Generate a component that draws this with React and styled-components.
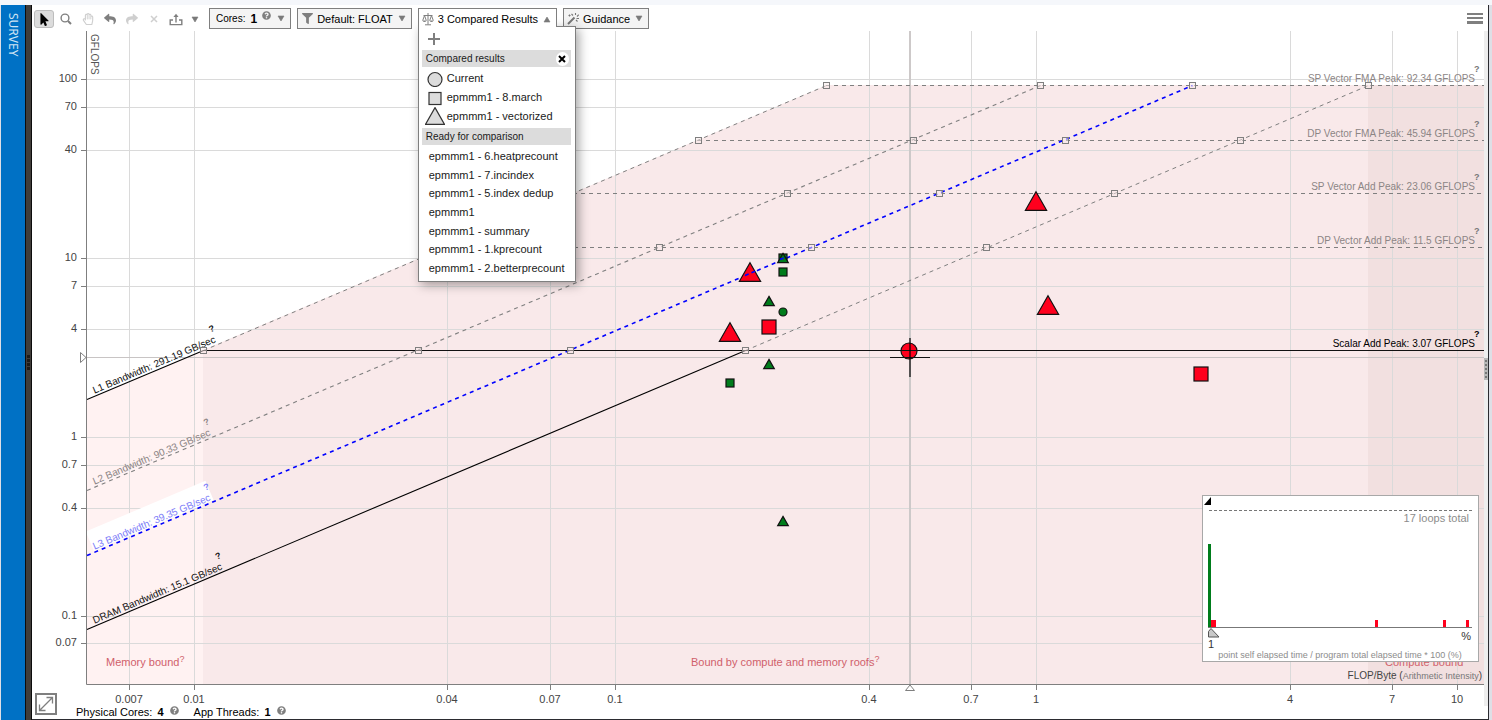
import React, { useState } from "react";
import styled, { createGlobalStyle, css } from "styled-components";
import { FaFilter, FaMousePointer, FaRegHandPaper, FaReply, FaShare, FaQuestionCircle } from "react-icons/fa";

const Global = createGlobalStyle`
  *, *::before, *::after { box-sizing: border-box; }
  body { margin: 0; background: #f5f7fb; font-family: "Liberation Sans", Arial, sans-serif; font-size: 11px; color: #1a1a1a; }
  button { font: inherit; color: inherit; margin: 0; padding: 0; border: 0; background: none; cursor: pointer; }
  ul { list-style: none; margin: 0; padding: 0; }
  h3 { margin: 0; }
`;

/* ---------- frame ---------- */
const Page = styled.div`
  display: flex;
  min-height: 100vh;
  padding: 5px 3px 0 1px;
  background: linear-gradient(#f5f7fb 5px, #dedfe6 5px);
`;
const Rail = styled.nav`
  flex: none;
  width: 24px;
  background: #0071c5;
`;
const RailLink = styled.a`
  display: block;
  width: 24px;
  padding-top: 8px;
  writing-mode: vertical-rl;
  font: 12px/23px "Noto Sans", sans-serif;
  color: #cfe3f3;
  text-decoration: none;
`;
const Handle = styled.div`
  display: grid;
  align-content: center;
  justify-content: center;
  gap: 1px;
`;
const LeftSplitter = styled(Handle)`
  flex: none;
  width: 7px;
  border: solid #0c0c0c;
  border-width: 0 1px;
  background: #403d3a;
`;
const RightSplitter = styled(Handle)`
  flex: none;
  width: 4px;
  background: #eeeeee;
`;
const RightGrip = styled(Handle)`
  width: 4px;
  height: 22px;
  gap: 2px;
  background: #b8b8b8;
`;
const Dot = styled.i`
  width: ${(p) => p.$size}px;
  height: ${(p) => p.$size}px;
  background: ${(p) => p.$color};
`;
const Main = styled.main`
  flex: 1;
  min-width: 0;
  display: flex;
  flex-direction: column;
  background: #fff;
  border: solid #2b2b30;
  border-width: 0 1px 1px 0;
`;

/* ---------- toolbar ---------- */
const Toolbar = styled.header`
  display: flex;
  align-items: flex-start;
  height: 26px;
  padding: 3px 5px 0 2px;
`;
const Tools = styled.div`
  display: flex;
  padding-top: 2px;
  margin-right: 6px;
`;
const Tool = styled.button`
  display: flex;
  align-items: center;
  justify-content: center;
  width: ${(p) => p.$w || 22}px;
  height: 18px;
  color: ${(p) => (p.$dim ? "#cfcfcf" : "#7f7f7f")};
  ${(p) =>
    p.$active &&
    css`
      width: 20px;
      margin-right: 1px;
      color: #000;
      background: #dcdcdc;
      border: 1px solid #bdbdbd;
      border-radius: 3px;
    `}
`;
const Drop = styled.div`
  position: relative;
  margin-right: 6px;
`;
const DropButton = styled.button`
  display: flex;
  align-items: center;
  height: 21px;
  padding: 0 5px 0 ${(p) => p.$pad || 4}px;
  white-space: nowrap;
  color: #000;
  background: #f4f4f4;
  border: 1px solid #7f7f7f;
  ${(p) =>
    p.$open &&
    css`
      position: relative;
      z-index: 3;
      height: 19px;
      padding-bottom: 0;
      padding-top: 2px;
      background: #fff;
      border-bottom: 0;
    `}
`;
const DropText = styled.span`
  margin: 0 5px 0 4px;
`;
const CoresText = styled.span`
  font-size: 10px;
`;
const CoresValue = styled.b`
  margin: 0 5px 0 5px;
  font-size: 12px;
`;
const CoresHelp = styled.span`
  display: flex;
  align-self: flex-start;
  margin: 2px 6px 0 0;
  color: #7f7f7f;
`;
const MenuButton = styled.button`
  display: grid;
  gap: 2px;
  width: 16px;
  margin: 5px 0 0 auto;
`;
const Bar = styled.i`
  height: 2px;
  background: #7f7f7f;
  &:last-child { height: 3px; }
`;

/* ---------- comparison menu ---------- */
const Menu = styled.section`
  position: absolute;
  z-index: 2;
  top: 18px;
  left: 0;
  width: 158px;
  padding: 0 4px 4px 3px;
  background: #fff;
  border: 1px solid #7f7f7f;
  box-shadow: 3px 3px 10px rgba(0, 0, 0, 0.35);
`;
const AddButton = styled.button`
  display: flex;
  align-items: center;
  height: 23px;
  padding-left: 5px;
`;
const MenuHead = styled.h3`
  display: flex;
  align-items: center;
  justify-content: space-between;
  height: 17px;
  padding: 0 2px 0 4px;
  font-size: 10px;
  font-weight: 400;
  background: #dcdcdc;
`;
const CloseButton = styled.button`
  display: flex;
  align-items: center;
  justify-content: center;
  width: 13px;
  height: 14px;
  border-radius: 7px;
  background: #fff;
`;
const ComparedList = styled.ul`
  display: grid;
  grid-auto-rows: 1fr;
  height: 56px;
  margin: 2px 0 3px;
  padding-left: 3px;
`;
const ReadyList = styled(ComparedList)`
  height: 130px;
  margin: 2px 0 0;
  padding-left: 7px;
`;
const Item = styled.li`
  display: flex;
  align-items: center;
  gap: 2px;
  white-space: nowrap;
`;

/* ---------- chart ---------- */
const ChartRow = styled.div`
  display: flex;
`;
const ChartArea = styled.div`
  position: relative;
  flex: 1;
  min-width: 0;
`;
const Plot = styled.svg`
  display: block;
  width: 100%;
  height: auto;
`;
const Histogram = styled.aside`
  position: absolute;
  right: 5px;
  bottom: 44px;
  width: 277px;
  height: 167px;
  background: #fff;
  border: 1px solid #a8a8a8;
`;
const Footer = styled.footer`
  position: relative;
  display: flex;
  align-items: center;
  gap: 15px;
  height: 13px;
  padding-left: 44px;
  color: #000;
`;
const Stat = styled.span`
  display: flex;
  align-items: center;
  gap: 5px;
  line-height: 15px;
`;
const StatHelp = styled.span`
  display: flex;
  margin: 0 0 4px 1px;
  color: #7f7f7f;
`;
const ExpandButton = styled.button`
  position: absolute;
  left: 3px;
  bottom: 4px;
  width: 22px;
  height: 22px;
`;

const X_TICKS = [
  ["0.007", 129], ["0.01", 194], ["0.04", 447], ["0.07", 550], ["0.1", 615], ["0.4", 869],
  ["0.7", 971], ["1", 1036], ["4", 1290], ["7", 1392], ["10", 1457],
];
const Y_TICKS = [
  ["100", 79], ["70", 107], ["40", 150], ["10", 258], ["7", 286], ["4", 329],
  ["1", 437], ["0.7", 465], ["0.4", 508], ["0.1", 616], ["0.07", 643],
];
const ROOFS = [
  { label: "SP Vector FMA Peak: 92.34 GFLOPS", y: 85, from: 826 },
  { label: "DP Vector FMA Peak: 45.94 GFLOPS", y: 140, from: 698 },
  { label: "SP Vector Add Peak: 23.06 GFLOPS", y: 193, from: 573 },
  { label: "DP Vector Add Peak: 11.5 GFLOPS", y: 247, from: 446 },
];
const BANDS = [
  { label: "L1 Bandwidth: 291.19 GB/sec", y: 399, knee: 203, end: 826, color: "#000", text: "#111", solid: true },
  { label: "L2 Bandwidth: 90.33 GB/sec", y: 490, knee: 418, end: 1040, color: "#7f7f7f", text: "#8c8585" },
  { label: "L3 Bandwidth: 39.35 GB/sec", y: 555, knee: 570, end: 1192, color: "#0000ff", text: "#8080f8", plate: true },
  { label: "DRAM Bandwidth: 15.1 GB/sec", y: 629, knee: 745, end: 1368, color: "#000", text: "#111", solid: true },
];
const NODES = [
  [203, 350], [698, 140], [826, 85], [418, 350], [659, 247], [787, 193], [913, 140], [1040, 85],
  [570, 350], [811, 247], [939, 193], [1065, 140], [1192, 85],
  [745, 350], [986, 247], [1114, 193], [1240, 140], [1368, 85],
];
const RED = "#ff001d";
const GREEN = "#007c1b";
const POINTS = [
  ["square", 783, 258, 4, GREEN], ["triangle", 783, 258, 5, GREEN],
  ["triangle", 750, 272, 10, RED], ["square", 783, 272, 4, GREEN],
  ["triangle", 769, 301, 5, GREEN], ["circle", 783, 312, 4, GREEN],
  ["square", 769, 327, 7, RED], ["triangle", 730, 332, 10, RED],
  ["triangle", 1036, 201, 10, RED], ["triangle", 1048, 305, 10, RED],
  ["triangle", 769, 364, 5, GREEN], ["square", 730, 383, 4, GREEN],
  ["square", 1201, 374, 7, RED], ["triangle", 783, 521, 5, GREEN], ["circle", 909, 351, 8, RED],
];

function Mark({ kind, x, y, r, fill, stroke = "#111" }) {
  const paint = { fill, stroke, strokeWidth: 1.2 };
  if (kind === "circle") return <circle cx={x} cy={y} r={r} {...paint} />;
  if (kind === "square") return <rect x={x - r} y={y - r} width={2 * r} height={2 * r} {...paint} />;
  const h = r * 0.93;
  return <path d={`M${x} ${y - h}L${x + r * 1.06} ${y + h}H${x - r * 1.06}Z`} {...paint} />;
}

function Caret({ up }) {
  return (
    <svg width="8" height="7" viewBox="0 0 8 7" aria-hidden="true">
      <path d={up ? "M1 6L4 1L7 6Z" : "M1 1H7L4 6Z"} fill="#7a7a7a" stroke="#7a7a7a" strokeWidth=".6" />
    </svg>
  );
}

function SearchIcon() {
  return (
    <svg width="12" height="12" viewBox="0 0 12 12" fill="none" stroke="currentColor">
      <circle cx="5" cy="5" r="3.9" strokeWidth="1.4" />
      <path d="M8 8L11 11" strokeWidth="2" />
    </svg>
  );
}

function ExportIcon() {
  return (
    <svg width="14" height="13" viewBox="0 0 14 13" fill="none" stroke="currentColor" strokeWidth="1.4">
      <path d="M4 7H1.2V11.6H12.8V7H10M7 9.5V2.5" />
      <path d="M4.4 4L7 .8L9.6 4Z" fill="currentColor" stroke="none" />
    </svg>
  );
}

function ScaleIcon() {
  return (
    <svg width="12" height="13" viewBox="0 0 12 13" fill="none" stroke="#7f7f7f" strokeWidth="1">
      <path d="M6 0V11.5M3 11.8H9M1.5 2.5H10.5M2.5 2.5L.7 7.5M2.5 2.5L4.3 7.5M9.5 2.5L7.7 7.5M9.5 2.5L11.3 7.5" />
      <path d="M.3 7.5H4.7Q2.5 10.5 .3 7.5ZM7.3 7.5H11.7Q9.5 10.5 7.3 7.5Z" fill="#7f7f7f" stroke="none" />
    </svg>
  );
}

function WandIcon() {
  return (
    <svg width="12" height="12" viewBox="0 0 12 12" fill="none" stroke="#777">
      <path d="M1 11L7.5 4.5" strokeWidth="2" />
      <path d="M8.5 0V2M10 3.5L11.8 1.7M9.5 5.5H12M4.5 1L6 2.5M1.5 2.5H3.5M2.5 1.5V3.5M9 7L10.5 8.5" strokeWidth="1.1" />
    </svg>
  );
}

function Band({ y, knee, end, color, text, label, solid, plate }) {
  return (
    <g>
      <g clipPath="url(#plotClip)">
        <g transform={`translate(87 ${y}) rotate(-23)`}>
          {plate && <rect x="8" y="-22" width="130" height="21" fill="#fff" />}
          <text x="9" y="-2" fontSize="10" fill={text}>
            {label}
            <tspan dx="-2" dy="-11" fontSize="9" fontWeight="700">?</tspan>
          </text>
        </g>
      </g>
      <path
        d={`M87 ${y + 0.5}L${solid ? knee + 0.5 : end + 0.5} ${solid ? 350.5 : 85.5}`}
        stroke={color}
        strokeWidth={plate ? 1.6 : 1.1}
        strokeDasharray={solid ? undefined : "4 4"}
      />
      {solid && <path d={`M${knee + 0.5} 350.5L${end + 0.5} 85.5`} stroke="#7f7f7f" strokeDasharray="4 4" />}
    </g>
  );
}

function Roofline() {
  return (
    <Plot viewBox="32 31 1452 675" fill="none" role="img" aria-label="Roofline chart">
      <defs>
        <clipPath id="plotClip"><rect x="87" y="31" width="1397" height="654" /></clipPath>
      </defs>
      <path d="M87 400L203 350V684H87Z" fill="#fff2f2" />
      <path d="M203 350L827 85H1368V684H203Z" fill="#f9e9ea" />
      <path d="M1368 85H1484V684H1368Z" fill="#f2e0e0" />

      <g stroke="#dadada">
        {X_TICKS.map(([t, x]) => <path key={t} d={`M${x + 0.5} 31V684`} />)}
        {Y_TICKS.map(([t, y]) => <path key={t} d={`M87 ${y + 0.5}H1484`} />)}
      </g>
      <g stroke="#7f7f7f">
        {X_TICKS.map(([t, x]) => <path key={t} d={`M${x + 0.5} 685V690`} />)}
        {Y_TICKS.map(([t, y]) => <path key={t} d={`M81 ${y + 0.5}H86`} />)}
        <path d="M86.5 31V684.5H1484" />
      </g>
      <g fontSize="11" fill="#444">
        {X_TICKS.map(([t, x]) => <text key={t} x={x} y="703" textAnchor="middle">{t}</text>)}
        {Y_TICKS.map(([t, y]) => <text key={t} x="77" y={y + 3} textAnchor="end">{t}</text>)}
      </g>
      <text transform="translate(91 34) rotate(90)" fontSize="10" fill="#555">GFLOPS</text>

      <g fontSize="11" fill="#d0606b">
        <text x="106" y="666">Memory bound<tspan dy="-4" fontSize="9">?</tspan></text>
        <text x="691" y="666">Bound by compute and memory roofs<tspan dy="-4" fontSize="9">?</tspan></text>
        <text x="1385" y="666">Compute bound</text>
      </g>
      <text x="1482" y="679" textAnchor="end" fontSize="10" fill="#444">
        FLOP/Byte (<tspan fontSize="9" fill="#777">Arithmetic Intensity</tspan>)
      </text>

      <path d="M87 357.5H1484" stroke="#c8c4c4" />
      <path d="M910 31V684" stroke="#cdc9c9" strokeWidth="2" />
      <path d="M80.5 352.5V362.5L86 357.5ZM905.5 690.5H914.5L910 685Z" fill="#fff" stroke="#7f7f7f" />

      {ROOFS.map((r) => (
        <g key={r.label}>
          <path d={`M${r.from} ${r.y + 0.5}H1484`} stroke="#7f7f7f" strokeDasharray="4 4" />
          <g fontSize="10" fill="#8c8585">
            <text x="1475" y={r.y - 3} textAnchor="end">{r.label}</text>
            <text x="1474" y={r.y - 13} fontSize="9" fontWeight="700" fill="#777">?</text>
          </g>
        </g>
      ))}
      {BANDS.map((b) => <Band key={b.label} {...b} />)}
      <path d="M203 350.5H1484" stroke="#111" strokeWidth="1.2" />
      <g fontSize="10" fill="#000">
        <text x="1475" y="347" textAnchor="end">Scalar Add Peak: 3.07 GFLOPS</text>
        <text x="1474" y="337" fontSize="9" fontWeight="700">?</text>
      </g>
      <g stroke="#7f7f7f" fill="#f9e9ea" fillOpacity=".5">
        {NODES.map(([x, y]) => <rect key={`${x}-${y}`} x={x - 2.5} y={y - 2.5} width="6" height="6" />)}
      </g>

      {POINTS.map(([kind, x, y, r, fill]) => (
        <Mark key={`${kind}${x}-${y}`} kind={kind} x={x} y={y} r={r} fill={fill} />
      ))}
      <path d="M745 275.5L755 271.3M780 259.5L787 256.5" stroke="#00f" strokeWidth="1.6" strokeDasharray="4 3" />
      <path d="M890 357.5H930M901 350.5H917" stroke="#111" />
      <path d="M910 338V377" stroke="#000" strokeWidth="2" strokeOpacity=".6" />
    </Plot>
  );
}

function LoopsHistogram() {
  return (
    <Histogram aria-label="Loops histogram">
      <svg width="275" height="165" viewBox="1203 496 275 165" fill="none">
        <path d="M1211 497V505H1204Z" fill="#000" />
        <path d="M1209 510.5H1472" stroke="#777" strokeDasharray="3 2" />
        <text x="1469" y="522" textAnchor="end" fontSize="11" fill="#8c8c8c">17 loops total</text>
        <rect x="1208" y="544" width="3" height="84" fill={GREEN} />
        <g fill={RED}>
          <rect x="1211" y="620" width="5" height="7" />
          <rect x="1375" y="620" width="3" height="7" />
          <rect x="1443" y="620" width="3" height="7" />
          <rect x="1466" y="620" width="3" height="7" />
        </g>
        <path d="M1208 627.5H1472" stroke="#777" />
        <path d="M1208.5 637V631.5L1211 628.5L1219 637Z" fill="#c8c8c8" stroke="#555" />
        <g fontSize="11" fill="#333">
          <text x="1208" y="648">1</text>
          <text x="1471" y="640" textAnchor="end">%</text>
        </g>
        <text x="1340" y="658" textAnchor="middle" fontSize="9" fill="#8c8c8c">
          point self elapsed time / program total elapsed time * 100 (%)
        </text>
      </svg>
    </Histogram>
  );
}

const COMPARED = [["circle", "Current"], ["square", "epmmm1 - 8.march"], ["triangle", "epmmm1 - vectorized"]];
const READY = [
  "epmmm1 - 6.heatprecount", "epmmm1 - 7.incindex", "epmmm1 - 5.index dedup", "epmmm1",
  "epmmm1 - summary", "epmmm1 - 1.kprecount", "epmmm1 - 2.betterprecount",
];

function CompareMenu({ onClose }) {
  return (
    <Menu>
      <AddButton aria-label="Add result">
        <svg width="14" height="14" viewBox="0 0 14 14" stroke="#7f7f7f" strokeWidth="2"><path d="M7 1V13M1 7H13" /></svg>
      </AddButton>
      <MenuHead>
        Compared results
        <CloseButton aria-label="Close" onClick={onClose}>
          <svg width="8" height="8" viewBox="0 0 8 8" stroke="#000" strokeWidth="2"><path d="M1 1L7 7M7 1L1 7" /></svg>
        </CloseButton>
      </MenuHead>
      <ComparedList>
        {COMPARED.map(([kind, name]) => (
          <Item key={name}>
            <svg width="20" height="18" viewBox="0 0 20 18">
              <Mark kind={kind} x={10} y={kind === "triangle" ? 9 : 10.5} r={kind === "triangle" ? 9 : kind === "circle" ? 7 : 6} fill="#dcdcdc" stroke="#333" />
            </svg>
            {name}
          </Item>
        ))}
      </ComparedList>
      <MenuHead>Ready for comparison</MenuHead>
      <ReadyList>{READY.map((name) => <Item key={name}>{name}</Item>)}</ReadyList>
    </Menu>
  );
}

export default function App() {
  const [open, setOpen] = useState(true);
  return (
    <>
      <Global />
      <Page>
        <Rail><RailLink href="#survey">SURVEY</RailLink></Rail>
        <LeftSplitter>{[0, 1, 2, 3].map((i) => <Dot key={i} $size={3} $color="#1d1b1a" />)}</LeftSplitter>
        <Main>
          <Toolbar>
            <Tools>
              <Tool $active aria-label="Select"><FaMousePointer size={13} /></Tool>
              <Tool aria-label="Zoom"><SearchIcon /></Tool>
              <Tool $dim aria-label="Pan"><FaRegHandPaper size={12} /></Tool>
              <Tool aria-label="Undo"><FaReply size={12} /></Tool>
              <Tool $dim aria-label="Redo"><FaShare size={12} /></Tool>
              <Tool $dim aria-label="Cancel">
                <svg width="8" height="8" viewBox="0 0 8 8" stroke="currentColor" strokeWidth="1.5"><path d="M1 1L7 7M7 1L1 7" /></svg>
              </Tool>
              <Tool aria-label="Export"><ExportIcon /></Tool>
              <Tool $w={16} aria-label="Export options"><Caret /></Tool>
            </Tools>
            <Drop>
              <DropButton $pad={6}>
                <CoresText>Cores:</CoresText>
                <CoresValue>1</CoresValue>
                <CoresHelp><FaQuestionCircle size={9} /></CoresHelp>
                <Caret />
              </DropButton>
            </Drop>
            <Drop>
              <DropButton><FaFilter size={11} color="#7f7f7f" /><DropText>Default: FLOAT</DropText><Caret /></DropButton>
            </Drop>
            <Drop>
              <DropButton $pad={3} $open={open} aria-expanded={open} onClick={() => setOpen(!open)}>
                <ScaleIcon /><DropText>3 Compared Results</DropText><Caret up={open} />
              </DropButton>
              {open && <CompareMenu onClose={() => setOpen(false)} />}
            </Drop>
            <Drop>
              <DropButton $pad={3}><WandIcon /><DropText>Guidance</DropText><Caret /></DropButton>
            </Drop>
            <MenuButton aria-label="Menu"><Bar /><Bar /><Bar /></MenuButton>
          </Toolbar>
          <ChartRow>
            <ChartArea>
              <Roofline />
              <LoopsHistogram />
            </ChartArea>
            <RightSplitter>
              <RightGrip>{[0, 1, 2, 3, 4].map((i) => <Dot key={i} $size={2} $color="#777" />)}</RightGrip>
            </RightSplitter>
          </ChartRow>
          <Footer>
            <ExpandButton aria-label="Expand">
              <svg width="22" height="22" viewBox="0 0 22 22" fill="none" stroke="#7f7f7f">
                <rect x="1" y="1" width="20" height="20" strokeWidth="2" />
                <path d="M5 17L17 5M11.5 4.5H17.5V10.5M4.5 11.5V17.5H10.5" strokeWidth="1.3" />
              </svg>
            </ExpandButton>
            <Stat>Physical Cores: <b>4</b><StatHelp><FaQuestionCircle size={9} /></StatHelp></Stat>
            <Stat>App Threads: <b>1</b><StatHelp><FaQuestionCircle size={9} /></StatHelp></Stat>
          </Footer>
        </Main>
      </Page>
    </>
  );
}
